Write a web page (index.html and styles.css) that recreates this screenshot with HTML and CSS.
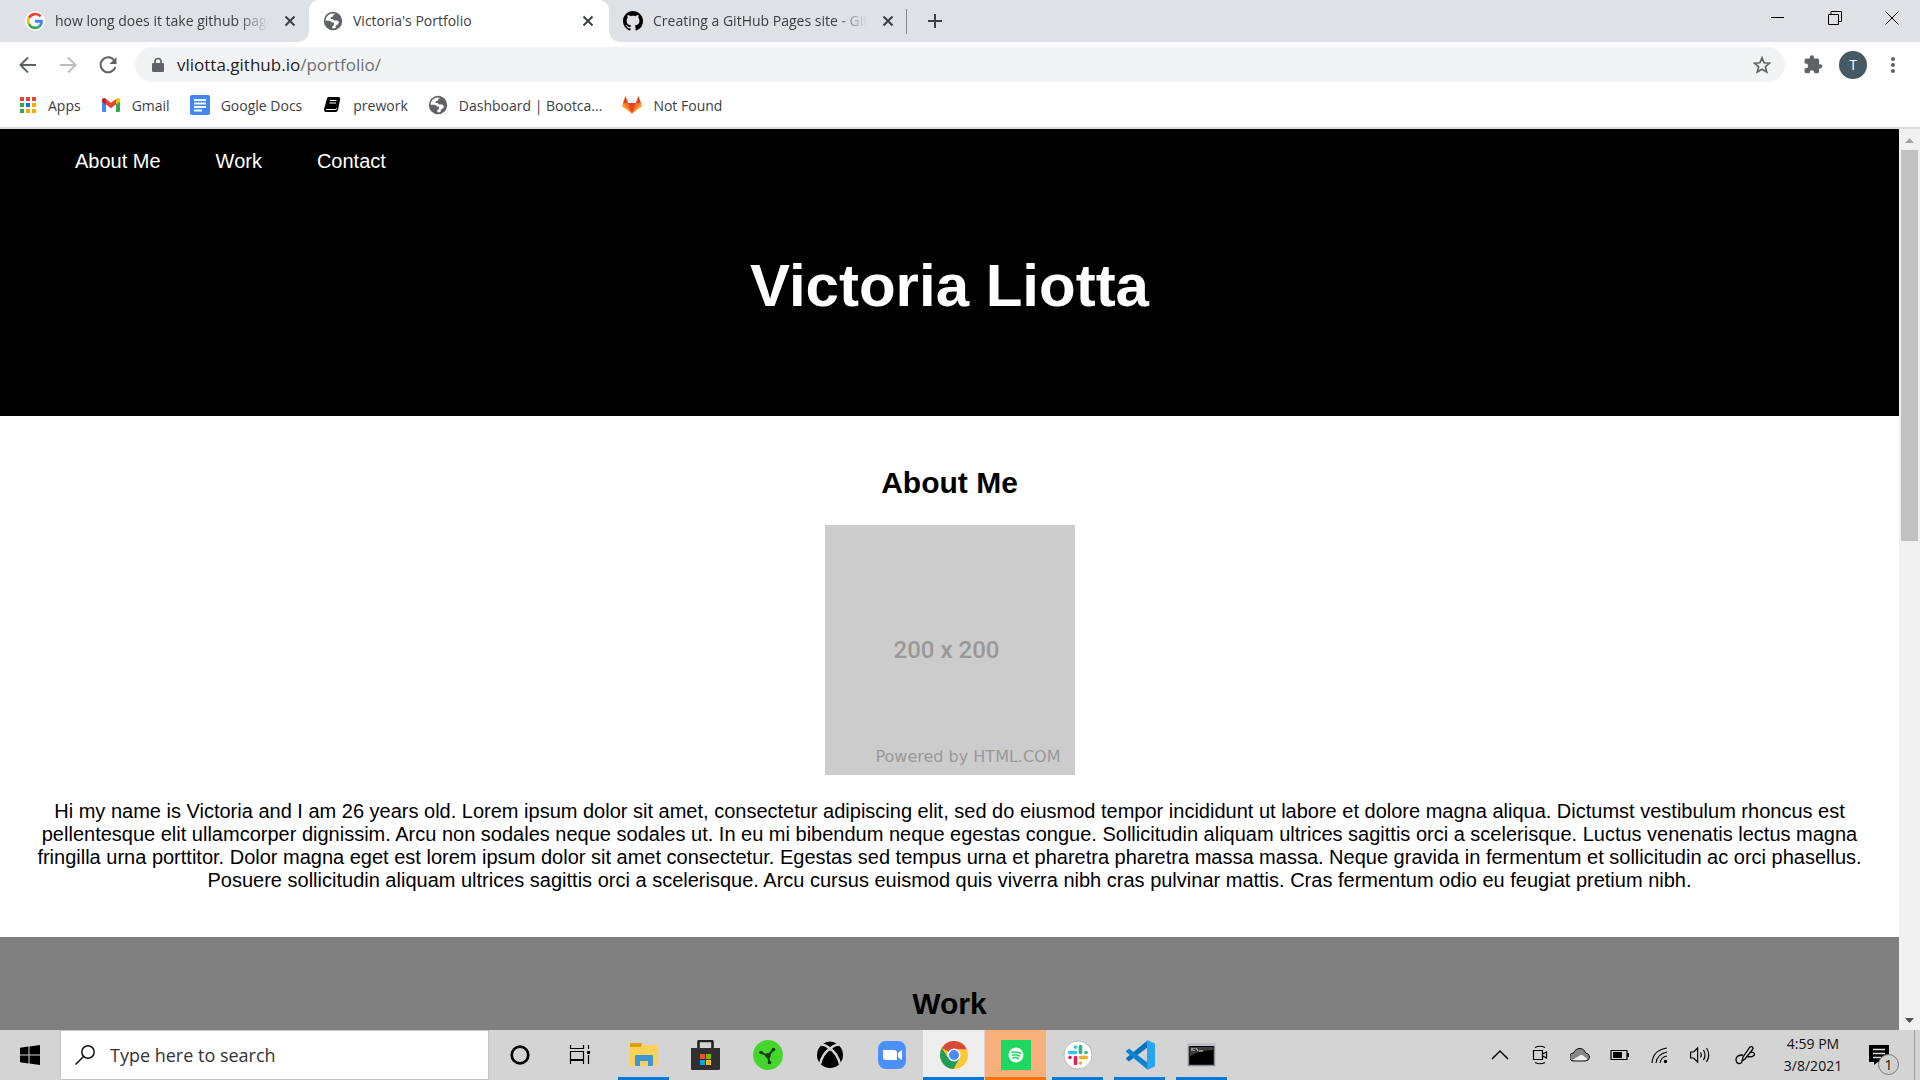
FILE: index.html
```html
<!DOCTYPE html>
<html lang="en">
<head>
<meta charset="utf-8">
<title>Victoria's Portfolio</title>
<link rel="stylesheet" href="styles.css">
</head>
<body>
<svg class="defs" aria-hidden="true">
  <symbol id="close" viewBox="0 0 12 12"><path d="M1.500 1.500l9 9M10.500 1.500l-9 9" fill="none" stroke="#3c4043" stroke-width="2"/></symbol>
  <symbol id="globe" viewBox="0 0 20 20"><circle cx="10" cy="10" r="9.200" fill="#5f6368"/><path d="M9.500 2.500c-4 .4-6.800 3.400-7 7.300h4.300l2.300 1.600h1.800v2.700l-1.600 1.100v2c1 .2 2.200.1 3.300-.3l.2-2.200 2.300-1.500.9-2-1.700-1.700-3.200-.1-1.300-1.500h-2.200l.1-1.700 2.300-.8.500-1.600 2-.9" fill="#fff"/></symbol>
</svg>

<div class="browser">
  <div class="tabstrip" role="tablist">
    <div class="tab" role="tab">
      <svg class="icon20" viewBox="0 0 20 20"><circle cx="10" cy="10" r="10" fill="#fff"/><path d="M15.300 5.100A7.300 7.300 0 0 0 3.600 6.500" stroke="#ea4335" stroke-width="2.600" fill="none" transform="translate(.4 .3)"/><path d="M3.900 6.800a7 7 0 0 0 0 6.400" stroke="#fbbc05" stroke-width="2.600" fill="none"/><path d="M3.900 13.200a7 7 0 0 0 10.600 2.100" stroke="#34a853" stroke-width="2.600" fill="none"/><path d="M10 8.700h7.900c.4 3.100-.6 5.700-2.500 7.500l-2.100-1.700c.9-.7 1.500-1.700 1.700-2.800h-5z" fill="#4285f4"/></svg>
      <span class="tab-title fade">how long does it take github pages</span>
      <button class="tab-close" aria-label="Close tab"><svg class="icon12"><use href="#close"/></svg></button>
    </div>
    <div class="tab active" role="tab" aria-selected="true">
      <svg class="icon20"><use href="#globe"/></svg>
      <span class="tab-title">Victoria's Portfolio</span>
      <button class="tab-close" aria-label="Close tab"><svg class="icon12"><use href="#close"/></svg></button>
    </div>
    <div class="tab" role="tab">
      <svg class="icon20" viewBox="0 0 16 16"><path d="M8 0C3.580 0 0 3.580 0 8c0 3.540 2.290 6.530 5.470 7.590.4.070.55-.17.55-.38 0-.19-.01-.82-.01-1.490-2.010.37-2.530-.49-2.690-.94-.09-.23-.48-.94-.82-1.130-.28-.15-.68-.52-.01-.53.63-.01 1.080.58 1.230.82.720 1.210 1.870.87 2.330.66.070-.52.28-.87.510-1.070-1.780-.2-3.640-.89-3.640-3.950 0-.87.310-1.590.82-2.150-.08-.2-.36-1.020.08-2.120 0 0 .67-.21 2.200.82.640-.18 1.320-.27 2-.27s1.360.09 2 .27c1.530-1.040 2.200-.82 2.200-.82.440 1.100.160 1.920.080 2.120.510.560.820 1.270.820 2.150 0 3.070-1.870 3.750-3.650 3.950.290.250.540.730.540 1.480 0 1.070-.01 1.930-.01 2.200 0 .21.150.46.550.38A8.010 8.010 0 0 0 16 8c0-4.420-3.580-8-8-8z"/></svg>
      <span class="tab-title fade">Creating a GitHub Pages site - GitHub</span>
      <button class="tab-close" aria-label="Close tab"><svg class="icon12"><use href="#close"/></svg></button>
    </div>
    <button class="new-tab" aria-label="New tab"><svg class="icon16" viewBox="0 0 16 16"><path d="M8 1v14M1 8h14" stroke="#3c4043" stroke-width="2"/></svg></button>
    <div class="window-buttons">
      <button aria-label="Minimize"><svg class="icon14" viewBox="0 0 14 14"><path d="M0 6.500h13" stroke="#000"/></svg></button>
      <button aria-label="Restore"><svg class="icon14" viewBox="0 0 14 14"><path d="M.5 3.500h10v10H.5zM3 3.500v-3h10.500v10H11" fill="none" stroke="#000"/></svg></button>
      <button aria-label="Close"><svg class="icon14" viewBox="0 0 14 14"><path d="M.5.5l13 13M13.500.5l-13 13" stroke="#000"/></svg></button>
    </div>
  </div>

  <div class="toolbar">
    <button aria-label="Back"><svg class="icon18" viewBox="0 0 18 18"><path d="M17 9H2M9 1.500L1.500 9 9 16.500" fill="none" stroke="#5f6368" stroke-width="2"/></svg></button>
    <button aria-label="Forward"><svg class="icon18" viewBox="0 0 18 18"><path d="M1 9h15M9 1.500L16.500 9 9 16.500" fill="none" stroke="#bbbdbf" stroke-width="2"/></svg></button>
    <button aria-label="Reload"><svg class="icon18" viewBox="0 0 18 18"><path d="M15.300 4.500A7.500 7.500 0 1 0 16.300 11" fill="none" stroke="#5f6368" stroke-width="2"/><path d="M17.500 1v7h-7z" fill="#5f6368"/></svg></button>
    <div class="omnibox">
      <svg class="lock" viewBox="0 0 12 16"><path d="M1 6h10q1 0 1 1v7q0 1-1 1H1q-1 0-1-1V7q0-1 1-1z" fill="#5f6368"/><path d="M3 7V4.500a3 3 0 0 1 6 0V7" fill="none" stroke="#5f6368" stroke-width="1.700"/></svg>
      <a class="url" href="#home">vliotta.github.io<span class="path">/portfolio/</span></a>
      <button aria-label="Bookmark this page"><svg class="icon18" viewBox="0 0 18 18"><path d="M9 1.800l2.100 5 5.400.4-4.100 3.500 1.300 5.300L9 13.200 4.300 16l1.300-5.300-4.100-3.500 5.400-.4z" fill="none" stroke="#5f6368" stroke-width="1.700"/></svg></button>
    </div>
    <button aria-label="Extensions"><svg class="icon20" viewBox="0 0 20 20"><path d="M17.300 9.200h-1.200V5.300c0-1-.8-1.700-1.700-1.700H11V2.400a2.100 2.100 0 0 0-4.200 0v1.200H3.300c-1 0-1.700.8-1.700 1.700v3.300h1.200a2.300 2.300 0 0 1 0 4.600H1.600v3.400c0 1 .8 1.700 1.700 1.700h3.400v-1.200a2.300 2.300 0 0 1 4.500 0v1.200h3.200c1 0 1.700-.8 1.700-1.700v-3.200h1.200a2.100 2.100 0 0 0 0-4.200z" fill="#5f6368"/></svg></button>
    <button class="avatar" aria-label="Profile">T</button>
    <button aria-label="Menu"><svg class="icon18" viewBox="0 0 18 18" fill="#5f6368"><circle cx="9" cy="3" r="2"/><circle cx="9" cy="9" r="2"/><circle cx="9" cy="15" r="2"/></svg></button>
  </div>

  <nav class="bookmarks" aria-label="Bookmarks">
    <a href="#apps"><svg class="icon18" viewBox="0 0 18 18"><path d="M1 1h4v4H1zM7 1h4v4H7zM13 1h4v4h-4z" fill="#ea4335"/><path d="M1 7h4v4H1zM1 13h4v4H1z" fill="#34a853"/><path d="M7 7h4v4H7z" fill="#1a73e8"/><path d="M13 7h4v4h-4zM7 13h4v4H7zM13 13h4v4h-4z" fill="#f9ab00"/></svg>Apps</a>
    <a href="#gmail"><svg class="icon20" viewBox="0 0 20 20"><path d="M1 5v11q0 1 1 1h3V8z" fill="#4285f4"/><path d="M19 5v11q0 1-1 1h-3V8z" fill="#34a853"/><path d="M15 9l4-2V5c0-2-2-2.600-3.200-1.600L15 4z" fill="#fbbc04"/><path d="M5 9.500V4l5 3.800L15 4v5.500l-5 3.700z" fill="#ea4335"/><path d="M1 5c0-2 2-2.600 3.200-1.600L5 4v5.500L1 6.700z" fill="#c5221f"/></svg>Gmail</a>
    <a href="#docs"><svg class="icon20" viewBox="0 0 20 20"><rect width="20" height="20" rx="2" fill="#4285f4"/><path d="M4 5h12M4 8.500h12M4 12h12M4 15.500h8" stroke="#fff" stroke-width="1.800"/></svg>Google Docs</a>
    <a href="#prework"><svg class="icon20" viewBox="0 0 20 20"><path d="M6.500 2h10q2 0 1.700 2l-2.200 11q-.4 2-2.500 2H4q-2 0-2-2 0-1 .5-2.500L5 3.500Q5.300 2 6.500 2z"/><path d="M8 5.500h6.500M7.500 8h6.500M4 14.500h9.500q1.200 0 1.500-1.300" stroke="#fff" fill="none"/></svg>prework</a>
    <a href="#dashboard"><svg class="icon20"><use href="#globe"/></svg>Dashboard | Bootca...</a>
    <a href="#notfound"><svg class="icon20" viewBox="0 0 20 20"><path d="M10 18.500L0 11.200 3.500 1l2.600 7h7.800l2.600-7L20 11.200z" fill="#fca326"/><path d="M10 18.500L1.200 8h17.600z" fill="#fc6d26"/><path d="M10 18.500L6.100 8h7.800zM3.500 1L6.100 8H1.200zM16.500 1l2.300 7h-4.900z" fill="#e24329"/></svg>Not Found</a>
  </nav>
</div>

<div class="viewport">
  <div class="page">
    <header class="hero" id="home">
      <nav class="site-nav">
        <a href="#about">About Me</a>
        <a href="#work">Work</a>
        <a href="#contact">Contact</a>
      </nav>
      <h1>Victoria Liotta</h1>
    </header>
    <main>
      <section class="section" id="about">
        <h2>About Me</h2>
        <div class="placeholder">
          <span class="size">200 x 200</span>
          <span class="credit">Powered by HTML.COM</span>
        </div>
        <p>Hi my name is Victoria and I am 26 years old. Lorem ipsum dolor sit amet, consectetur adipiscing elit, sed do eiusmod tempor incididunt ut labore et dolore magna aliqua. Dictumst vestibulum rhoncus est pellentesque elit ullamcorper dignissim. Arcu non sodales neque sodales ut. In eu mi bibendum neque egestas congue. Sollicitudin aliquam ultrices sagittis orci a scelerisque. Luctus venenatis lectus magna fringilla urna porttitor. Dolor magna eget est lorem ipsum dolor sit amet consectetur. Egestas sed tempus urna et pharetra pharetra massa massa. Neque gravida in fermentum et sollicitudin ac orci phasellus. Posuere sollicitudin aliquam ultrices sagittis orci a scelerisque. Arcu cursus euismod quis viverra nibh cras pulvinar mattis. Cras fermentum odio eu feugiat pretium nibh.</p>
      </section>
      <section class="section work" id="work">
        <h2>Work</h2>
      </section>
    </main>
  </div>
  <div class="scrollbar" aria-hidden="true">
    <svg class="arrow" viewBox="0 0 21 21"><path d="M6 14h9l-4.500-5z" fill="#a3a3a3"/></svg>
    <div class="track"><div class="thumb"></div></div>
    <svg class="arrow" viewBox="0 0 21 21"><path d="M6 9h9l-4.500 5z" fill="#505050"/></svg>
  </div>
</div>

<footer class="taskbar">
  <button class="start" aria-label="Start"><svg class="icon20" viewBox="0 0 20 20"><path d="M0 2.800l8.500-1.200V9.500H0zM9.500 1.400L20 0v9.500H9.500zM0 10.500h8.500v7.900L0 17.200zM9.500 10.500H20V20L9.500 18.600z"/></svg></button>
  <label class="search">
    <svg class="icon20" viewBox="0 0 20 20"><circle cx="13" cy="7" r="6.200" fill="none" stroke="#111" stroke-width="1.500"/><path d="M8.500 11.500L.5 19.500" stroke="#111" stroke-width="1.500"/></svg>
    <input type="text" placeholder="Type here to search" aria-label="Type here to search">
  </label>
  <div class="apps">
    <button aria-label="Cortana"><svg class="icon30" viewBox="0 0 30 30"><circle cx="15" cy="15" r="8.300" fill="none" stroke="#000" stroke-width="2.700"/></svg></button>
    <button aria-label="Task View"><svg class="icon30" viewBox="0 0 30 30"><path d="M3.500 5v3.500h13V5M3.500 11.500h13v8h-13zM3.500 24v-3.500h13V24M21.500 5v4M21.500 15v9" fill="none" stroke="#000" stroke-width="1.200"/><path d="M20 11h3v3h-3z"/></svg></button>
    <button class="open" aria-label="File Explorer"><svg class="icon30" viewBox="0 0 30 30"><path d="M1 3h11q1 0 1 1l-1 3H1z" fill="#e0a000"/><path d="M1 7h11l2-2h14v21H1z" fill="#ffd257"/><path d="M6 26V16q0-1 1-1h16q1 0 1 1v10h-5v-5h-8v5z" fill="#3c96d8"/></svg></button>
    <button aria-label="Microsoft Store"><svg class="icon30" viewBox="0 0 30 30"><path d="M7.500 9V2q0-1 1-1h12q1 0 1 1v7" fill="none" stroke="#222" stroke-width="2.600"/><path d="M0 8h29v21q0 1-1 1H1q-1 0-1-1z" fill="#303030"/><path d="M9 14h5v5H9z" fill="#f25022"/><path d="M15 14h5v5h-5z" fill="#7fba00"/><path d="M9 20h5v5H9z" fill="#00a4ef"/><path d="M15 20h5v5h-5z" fill="#ffb900"/></svg></button>
    <button aria-label="Razer Cortex"><svg class="icon30" viewBox="0 0 30 30"><circle cx="15" cy="15" r="15" fill="#44d62c"/><path d="M8 12.500l7 3.500 5-6M15 16l1.500 7" fill="none" stroke="#173a15" stroke-width="2"/><circle cx="15" cy="15.500" r="2.600" fill="#173a15"/><circle cx="8" cy="12.500" r="1.800" fill="#173a15"/><circle cx="20.500" cy="9.500" r="1.800" fill="#173a15"/><circle cx="16.500" cy="22.500" r="1.800" fill="#173a15"/></svg></button>
    <button aria-label="Xbox"><svg class="icon30" viewBox="0 0 30 30"><circle cx="15" cy="15" r="13" fill="#000"/><path d="M6 5q4-1 9 4 5-5 9-4M15 8.500C10 12 6.500 18 5 24M15 8.500c5 3.500 8.500 9.500 10 15.500" fill="none" stroke="#d3d3d3" stroke-width="2.500"/><path d="M8.500 3.500q4-2 6.500-2t6.500 2Q17 4 15 6 13 4 8.500 3.500z" fill="#000"/></svg></button>
    <button aria-label="Zoom"><svg class="icon30" viewBox="0 0 30 30"><rect x="1" y="1" width="28" height="28" rx="8" fill="#4a90ff"/><path d="M6 10h11q3 0 3 3v7H9q-3 0-3-3zM21 13l4-3v10l-4-3z" fill="#fff"/></svg></button>
    <button class="open current" aria-label="Google Chrome"><svg class="icon30" viewBox="0 0 30 30"><circle cx="15" cy="15" r="14" fill="#fbc934"/><path d="M15 15L2.900 8A14 14 0 0 1 27.700 9.200H15z" fill="#d8483b"/><path d="M2.900 8A14 14 0 0 0 14.500 29l5.800-10.500L15 15 8.500 17z" fill="#1f9d58"/><circle cx="15" cy="15" r="6.500" fill="#fff"/><circle cx="15" cy="15" r="5" fill="#4a8af4"/></svg></button>
    <button class="open alert" aria-label="Spotify"><svg class="icon30" viewBox="0 0 30 30"><path d="M0 0h30v30H0z" fill="#1ed760"/><circle cx="15" cy="15" r="7.500" fill="#fff"/><path d="M10.500 12.500q5-1.500 9.500 1M11 15.300q4-1.200 8 .8M11.500 18q3.500-1 6.500.6" fill="none" stroke="#1ed760" stroke-width="1.500"/></svg></button>
    <button class="open" aria-label="Slack"><svg class="icon30" viewBox="0 0 30 30"><circle cx="15" cy="15" r="14" fill="#fff" stroke="#bbb"/><g fill="none" stroke-width="3.600" stroke-linecap="round"><path d="M12.500 7v.1M6.500 12.500h6" stroke="#36c5f0"/><path d="M17.500 6.500v6M23 12.500h.1" stroke="#2eb67d"/><path d="M17.500 17.500h6M17.500 23v.1" stroke="#ecb22e"/><path d="M12.500 17.500v6M7 17.500h.1" stroke="#e01e5a"/></g></svg></button>
    <button class="open" aria-label="Visual Studio Code"><svg class="icon30" viewBox="0 0 30 30"><path d="M1 19l3 2.500L23 7V0L1.200 18z" fill="#0074c0"/><path d="M1 11l3-2.500L23 23v7L1.200 12z" fill="#0a84cf"/><path d="M22 0l8 3.500v23L22 30z" fill="#27a5ee"/></svg></button>
    <button class="open" aria-label="Command Prompt"><svg class="icon30" viewBox="0 0 30 30"><path d="M1.500 4.500h26v21h-26z" stroke="#8a8f96" stroke-width="1.500"/><path d="M1 3.500h27V6H1z" fill="#b9bec6"/><path d="M3 7h23v3q-13 0-23 6z" fill="#3c3c3c"/><path d="M5 8v3M7 8v1M7 10v1M9 8l2 3M12 11h4" stroke="#ddd"/></svg></button>
  </div>
  <div class="tray">
    <button aria-label="Show hidden icons"><svg class="icon20" viewBox="0 0 20 20"><path d="M2 14l8-8 8 8" fill="none" stroke="#000" stroke-width="1.500"/></svg></button>
    <button aria-label="Meet Now"><svg class="icon20" viewBox="0 0 20 20"><path d="M3.500 5.500h9v9h-9zM12.500 9l4-2v6l-4-2M5 2.500q5-2.500 10 0M5 17.500q5 2.500 10 0" fill="none" stroke="#000" stroke-width="1.200"/></svg></button>
    <button aria-label="OneDrive"><svg class="icon20" viewBox="0 0 20 20"><path d="M4 16a4 4 0 0 1-.5-8Q5.500 3.500 10 3.500q4 0 5.500 4.500 4 .5 4 4t-4 4z" fill="#888" stroke="#111"/><path d="M3 14.500L11.500 9.500l6 4.500-2 1.200H4z" fill="#eee"/></svg></button>
    <button aria-label="Battery"><svg class="icon20" viewBox="0 0 20 20"><path d="M1 5.500h16v9H1z" fill="none" stroke="#000" stroke-width="1.200"/><path d="M3 7h9v6H3zM17 8h2v4h-2z"/></svg></button>
    <button aria-label="Wi-Fi"><svg class="icon20" viewBox="0 0 20 20"><path d="M2 18Q3 5 17 3M6 18q1-9 11-11M10 18q1-6 7-7" fill="none" stroke="#000" stroke-width="1.100"/><circle cx="15.500" cy="16.500" r="1.700"/></svg></button>
    <button aria-label="Volume"><svg class="icon20" viewBox="0 0 20 20"><path d="M.6 7v6h3l4 4V3l-4 4zM10.500 7.500q1.500 2.500 0 5M13.500 5q3 5 0 10M16.500 3q4.500 7 0 14" fill="none" stroke="#000" stroke-width="1.200"/></svg></button>
    <button class="pen" aria-label="Windows Ink"><svg class="icon20" viewBox="0 0 20 20"><path d="M7 16l1-4 7-10q1.500-1 2.500.2t0 2.300L10 14zM8 10Q1 10 1 14.500 1 18 4 18.500 7 18.500 7 16M16 7q4 .5 3.500 3-2 2.500-7 1.500" fill="none" stroke="#000" stroke-width="1.300"/></svg></button>
    <div class="clock"><span>4:59 PM</span><span>3/8/2021</span></div>
    <button class="notifications" aria-label="Notifications"><svg class="icon20" viewBox="0 0 20 20"><path d="M0 0h20v17H9l-4 3v-3H0z"/><path d="M4 4.500h12M4 8.500h12M4 12.500h8" stroke="#ddd" stroke-width="1.300"/></svg><span class="badge">1</span></button>
  </div>
</footer>
</body>
</html>
```
FILE: styles.css
```css
* { box-sizing: border-box; }

body {
  margin: 0;
  height: 100vh;
  display: flex;
  flex-direction: column;
  overflow: hidden;
  background: #fff;
  font-family: "Open Sans", "Noto Sans", sans-serif;
  font-size: 14px;
  color: #3c4043;
}

button {
  display: flex;
  align-items: center;
  justify-content: center;
  flex: none;
  padding: 0;
  border: 0;
  background: none;
  font: inherit;
  color: inherit;
}

a { color: inherit; text-decoration: none; }
svg { display: block; flex: none; }
.defs { position: absolute; width: 0; height: 0; }

.icon12 { width: 12px; height: 12px; }
.icon14 { width: 14px; height: 14px; }
.icon16 { width: 16px; height: 16px; }
.icon18 { width: 18px; height: 18px; }
.icon20 { width: 20px; height: 20px; }
.icon30 { width: 30px; height: 30px; }

/* Browser chrome */
.browser { flex: none; border-bottom: 2px solid #dadce0; }

.tabstrip {
  display: flex;
  height: 42px;
  background: #dee1e6;
}

.tab {
  position: relative;
  display: flex;
  align-items: center;
  gap: 10px;
  width: 300px;
  padding: 0 14px;
}
.tab:first-child { width: 309px; padding: 0 12px 0 25px; }
.tab.active {
  background: #fff;
  border-radius: 10px 10px 0 0;
}
.tab.active::before,
.tab.active::after {
  content: "";
  position: absolute;
  bottom: 0;
  width: 10px;
  height: 10px;
}
.tab.active::before { left: -10px; background: radial-gradient(circle at 0 0, #dee1e6 9px, #fff 10px); }
.tab.active::after { right: -10px; background: radial-gradient(circle at 100% 0, #dee1e6 9px, #fff 10px); }

.tab-title { flex: 1; min-width: 0; overflow: hidden; white-space: nowrap; line-height: 20px; }
.fade { mask-image: linear-gradient(to right, #000 calc(100% - 36px), transparent calc(100% - 4px)); }
.tab-close { width: 14px; height: 14px; }

.new-tab {
  position: relative;
  width: 52px;
}
.new-tab::before {
  content: "";
  position: absolute;
  left: -3px;
  width: 1px;
  height: 25px;
  background: #80868b;
}

.window-buttons { display: flex; height: 36px; margin-left: auto; }
.window-buttons button { width: 57px; }

.toolbar {
  display: flex;
  align-items: center;
  height: 45px;
  padding: 0 7px 0 8px;
}
.toolbar > button { width: 40px; height: 40px; }

.omnibox {
  flex: 1;
  display: flex;
  align-items: center;
  height: 35px;
  margin: 0 8px 0 7px;
  padding: 0 14px 0 17px;
  border-radius: 18px;
  background: #f1f3f4;
}
.lock { width: 12px; height: 16px; margin-right: 13px; }
.url { flex: 1; font-size: 17px; line-height: 24px; color: #202124; }
.path { color: #6b6f73; }

.toolbar > .avatar {
  width: 28px;
  height: 28px;
  margin: 0 6px;
  border-radius: 50%;
  background: #455a64;
  color: #fff;
}

.bookmarks {
  display: flex;
  gap: 20px;
  height: 40px;
  padding: 0 19px;
}
.bookmarks a { display: flex; align-items: center; gap: 11px; height: 36px; white-space: nowrap; }

/* Portfolio page */
.viewport { flex: 1; min-height: 0; display: flex; }

.page {
  flex: 1;
  min-width: 0;
  overflow: hidden;
  font-family: "Liberation Sans", Arial, sans-serif;
  font-size: 20px;
  line-height: 23px;
  text-align: center;
  color: #000;
}

.hero { padding: 21px 0 95px; background: #000; color: #fff; }
.site-nav { display: flex; gap: 55px; padding-left: 75px; }
.hero h1 { margin: 78px 0 0; font-size: 60px; line-height: 70px; }

.section { padding: 50px 37px 45px; }
.section h2 { margin: 0 0 25px; font-size: 30px; line-height: 34px; }
.section p { margin: 25px 0 0; }
.work { background: #808080; }

.placeholder {
  display: grid;
  grid-template-rows: 1fr auto 1fr;
  justify-items: center;
  width: 250px;
  height: 250px;
  margin: 0 auto;
  background: #ccc;
  color: #999;
}
.size { grid-row: 2; padding-right: 6px; font-family: Roboto, sans-serif; font-size: 24px; font-weight: 500; line-height: 30px; }
.credit {
  grid-row: 3;
  align-self: end;
  justify-self: end;
  padding: 0 14px 8px 0;
  font-family: "DejaVu Sans", sans-serif;
  font-size: 16px;
  line-height: 20px;
}

.scrollbar {
  flex: none;
  display: flex;
  flex-direction: column;
  width: 21px;
  background: #f1f1f1;
}
.arrow { width: 21px; height: 21px; }
.track { flex: 1; padding: 0 2px; }
.thumb { height: 45.5%; background: #c1c1c1; }

/* Taskbar */
.taskbar {
  flex: none;
  display: flex;
  height: 50px;
  background: #d4d4d4;
  color: #111;
}
.start { width: 60px; }

.search {
  display: flex;
  align-items: center;
  gap: 15px;
  width: 429px;
  padding: 0 14px;
  border: 1px solid #c4c4c4;
  background: #fff;
}
.search input {
  flex: 1;
  min-width: 0;
  padding: 0;
  border: 0;
  outline: 0;
  background: none;
  font: inherit;
  font-size: 18px;
}
.search input::placeholder { color: #333; opacity: 1; }

.apps { display: flex; }
.apps button { position: relative; width: 62px; border-right: 1px solid transparent; background-clip: padding-box; }
.apps .open::after {
  content: "";
  position: absolute;
  bottom: 0;
  left: 5px;
  right: 5px;
  height: 3px;
  background: #0078d7;
}
.apps .current { background-color: #eee; }
.apps .alert { background-color: #f7b07a; }
.apps .current::after, .apps .alert::after { left: 0; right: 0; }
.apps .alert::after { background: #ff7300; }

.tray {
  display: flex;
  margin-left: auto;
  margin-right: 5px;
  border-right: 1px solid #a0a0a0;
}
.tray button { width: 40px; }
.tray .pen { width: 50px; }
.clock {
  display: flex;
  flex-direction: column;
  justify-content: center;
  width: 86px;
  line-height: 22px;
  text-align: center;
}
.tray .notifications { position: relative; width: 58px; padding-right: 12px; }
.badge {
  position: absolute;
  right: 15px;
  bottom: 5px;
  width: 21px;
  height: 21px;
  border: 1px solid #777;
  border-radius: 50%;
  background: #d0d0d0;
  line-height: 19px;
  text-align: center;
}
```
